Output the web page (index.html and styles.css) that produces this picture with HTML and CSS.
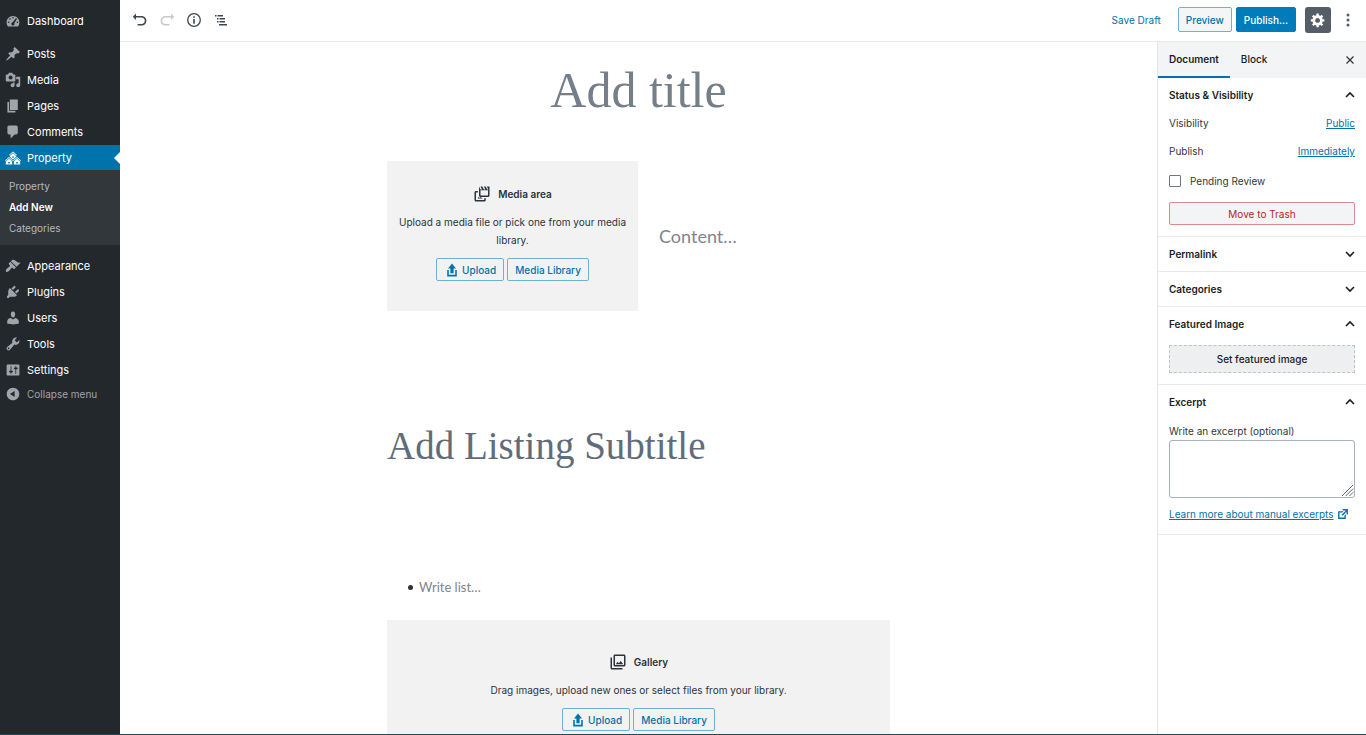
FILE: index.html
```html
<!DOCTYPE html>
<html lang="en">
<head>
<meta charset="utf-8">
<title>Add New Property</title>
<link rel="stylesheet" href="styles.css">
</head>
<body>
<svg class="sprite" aria-hidden="true">
  <symbol id="i-upload" viewBox="0 0 20 20"><path d="M8 14V8H5l5-6 5 6h-3v6H8zm-2 2v-6H4v8h12v-8h-2v6H6z"/></symbol>
  <symbol id="i-down" viewBox="0 0 12 12"><path d="M2 4l4 4 4-4" fill="none" stroke="currentColor" stroke-width="1.6"/></symbol>
  <symbol id="i-up" viewBox="0 0 12 12"><path d="M2 8l4-4 4 4" fill="none" stroke="currentColor" stroke-width="1.6"/></symbol>
</svg>
<div class="app">
  <nav class="menu" aria-label="Main menu">
    <ul class="menu-list">
      <li><a class="menu-item" href="#"><svg class="icon" viewBox="0 0 20 20"><path fill-rule="evenodd" d="M3.76 17h12.48A8.3 8.3 0 0 0 18 11.9C18 7.5 14.4 3.9 10 3.9s-8 3.6-8 8c0 1.9.7 3.7 1.76 5.1zM10 5a1 1 0 1 1 0 2 1 1 0 0 1 0-2zM6.2 6.5a1 1 0 1 1 0 2 1 1 0 0 1 0-2zM13.8 6.2l1.2 1-3.3 5.6a2 2 0 1 1-2-1.1zM4.5 10.5a1 1 0 1 1 0 2 1 1 0 0 1 0-2zM15.5 10.5a1 1 0 1 1 0 2 1 1 0 0 1 0-2z"/></svg>Dashboard</a></li>
      <li class="menu-gap small"><a class="menu-item" href="#"><svg class="icon" viewBox="0 0 20 20"><path d="M10.44 3.02l1.82-1.82 6.36 6.35-1.83 1.82c-1.05-.68-2.48-.57-3.41.36l-.75.75c-.92.93-1.04 2.35-.35 3.41l-1.83 1.82-2.41-2.41-2.8 2.79c-.42.42-3.38 2.71-3.8 2.29s1.86-3.39 2.28-3.81l2.79-2.79L4.1 9.36l1.83-1.82c1.05.69 2.48.57 3.4-.36l.75-.75c.93-.92 1.05-2.35.36-3.41z"/></svg>Posts</a></li>
      <li><a class="menu-item" href="#"><svg class="icon" viewBox="0 0 20 20"><path d="M13 11V4c0-.55-.45-1-1-1h-1.67L9 1H5L3.67 3H2c-.55 0-1 .45-1 1v7c0 .55.45 1 1 1h10c.55 0 1-.45 1-1zM7 4.5c1.38 0 2.5 1.12 2.5 2.5S8.38 9.5 7 9.5 4.5 8.38 4.5 7 5.62 4.5 7 4.5zM14 6h5v10.5c0 1.38-1.12 2.5-2.5 2.5S14 17.88 14 16.5s1.12-2.5 2.5-2.5c.17 0 .34.02.5.05V9h-3V6zm-4 8.05V13h2v3.5c0 1.38-1.12 2.5-2.5 2.5S7 17.88 7 16.5 8.12 14 9.5 14c.17 0 .34.02.5.05z"/></svg>Media</a></li>
      <li><a class="menu-item" href="#"><svg class="icon" viewBox="0 0 20 20"><path d="M6 15V2h10v13H6zm-1 1h8v2H3V5h2v11z"/></svg>Pages</a></li>
      <li><a class="menu-item" href="#"><svg class="icon" viewBox="0 0 20 20"><path d="M5 2h9c1.1 0 2 .9 2 2v7c0 1.1-.9 2-2 2h-2l-5 5v-5H5c-1.1 0-2-.9-2-2V4c0-1.1.9-2 2-2z"/></svg>Comments</a></li>
      <li><a class="menu-item current" href="#" aria-current="page"><svg class="icon" viewBox="0 0 20 20"><path d="M14.27 6.87L10 3.14 5.73 6.87 5 6.14l5-4.38 5 4.38zM14 8.42l-4.05 3.43L6 8.38v-.74l4-3.5 4 3.5v.78zM11 9.7V8H9v1.7h2zm-1.73 4.03L5 10 .73 13.73 0 13l5-4.38L10 13zm10 0L15 10l-4.27 3.73L10 13l5-4.38L20 13zM5 11l4 3.5V18H1v-3.5zm10 0l4 3.5V18h-8v-3.5zm-9 6v-2H4v2h2zm10 0v-2h-2v2h2z"/></svg>Property</a>
        <ul class="submenu">
          <li><a href="#">Property</a></li>
          <li><a class="active" href="#">Add New</a></li>
          <li><a href="#">Categories</a></li>
        </ul>
      </li>
      <li class="menu-gap"><a class="menu-item" href="#"><svg class="icon" viewBox="0 0 20 20"><path d="M14.48 11.06L7.41 3.99l1.5-1.5c.5-.56 2.3-.47 3.51.32 1.21.8 1.43 1.28 2.91 2.1 1.18.64 2.45 1.26 4.45.85zm-.71.71L6.7 4.7 4.93 6.47c-.39.39-.39 1.02 0 1.41l1.06 1.06c.39.39.39 1.03 0 1.42-.6.6-1.43 1.11-2.21 1.69-.35.26-.7.53-1.01.84C1.43 14.23.4 16.08 1.4 17.07c.99 1 2.84-.03 4.18-1.36.31-.31.58-.66.85-1.02.57-.78 1.08-1.61 1.69-2.21.39-.39 1.02-.39 1.41 0l1.06 1.06c.39.39 1.02.39 1.41 0z"/></svg>Appearance</a></li>
      <li><a class="menu-item" href="#"><svg class="icon" viewBox="0 0 20 20"><path d="M13.11 4.36L9.87 7.6 8 5.73l3.24-3.24c.35-.34 1.05-.2 1.56.32.52.51.66 1.21.31 1.55zm-8 1.77l.91-1.12 9.01 9.01-1.19.84c-.71.71-2.63 1.16-3.82 1.16H6.14L4.9 17.26c-.59.59-1.54.59-2.12 0-.59-.58-.59-1.53 0-2.12l1.24-1.24v-3.88c0-1.13.4-3.19 1.09-3.89zm7.26 3.97l3.24-3.24c.34-.35 1.04-.21 1.55.31.52.51.66 1.21.31 1.55l-3.24 3.25z"/></svg>Plugins</a></li>
      <li><a class="menu-item" href="#"><svg class="icon" viewBox="0 0 20 20"><path d="M10 9.25c-2.27 0-2.73-3.44-2.73-3.44C7 4.02 7.82 2 9.97 2c2.16 0 2.98 2.02 2.71 3.81 0 0-.41 3.44-2.68 3.44zm0 2.57L12.72 10c2.39 0 4.52 2.33 4.52 4.53v2.49s-3.65 1.13-7.24 1.13c-3.65 0-7.24-1.13-7.24-1.13v-2.49c0-2.25 1.94-4.48 4.47-4.48z"/></svg>Users</a></li>
      <li><a class="menu-item" href="#"><svg class="icon" viewBox="0 0 20 20"><path d="M16.68 9.77c-1.34 1.34-3.3 1.67-4.95.99l-5.41 6.52c-.99.99-2.59.99-3.58 0s-.99-2.59 0-3.57l6.52-5.42c-.68-1.65-.35-3.61.99-4.95 1.28-1.28 3.12-1.62 4.72-1.06l-2.89 2.89 2.82 2.82 2.86-2.87c.53 1.58.18 3.39-1.08 4.65zM3.81 16.21c.4.39 1.04.39 1.43 0 .4-.4.4-1.04 0-1.43-.39-.4-1.03-.4-1.43 0-.39.39-.39 1.03 0 1.43z"/></svg>Tools</a></li>
      <li><a class="menu-item" href="#"><svg class="icon" viewBox="0 0 20 20"><path d="M18 16V4c0-.55-.45-1-1-1H3c-.55 0-1 .45-1 1v12c0 .55.45 1 1 1h14c.55 0 1-.45 1-1zM8 11h1c.55 0 1 .45 1 1s-.45 1-1 1H8v1.5c0 .28-.22.5-.5.5s-.5-.22-.5-.5V13H6c-.55 0-1-.45-1-1s.45-1 1-1h1V5.5c0-.28.22-.5.5-.5s.5.22.5.5V11zm5-2h-1c-.55 0-1-.45-1-1s.45-1 1-1h1V5.5c0-.28.22-.5.5-.5s.5.22.5.5V7h1c.55 0 1 .45 1 1s-.45 1-1 1h-1v5.5c0 .28-.22.5-.5.5s-.5-.22-.5-.5V9z"/></svg>Settings</a></li>
    </ul>
    <button class="menu-item collapse" type="button"><svg class="icon" viewBox="0 0 20 20"><path d="M10 2.16c4.33 0 7.84 3.51 7.84 7.84s-3.51 7.84-7.84 7.84S2.16 14.33 2.16 10 5.71 2.16 10 2.16zm2 11.72V6.12L6.18 9.97z"/></svg>Collapse menu</button>
  </nav>

  <div class="editor">
    <header class="toolbar">
      <div class="tools">
        <button class="tool" type="button" aria-label="Undo"><svg class="icon" viewBox="0 0 20 20"><path d="M12 5H5V2L1 6l4 4V7h7c2.2 0 4 1.8 4 4s-1.8 4-4 4H7v2h5c3.3 0 6-2.7 6-6s-2.7-6-6-6z"/></svg></button>
        <button class="tool faded" type="button" aria-label="Redo"><svg class="icon" viewBox="0 0 20 20"><path d="M8 5h7V2l4 4-4 4V7H8c-2.2 0-4 1.8-4 4s1.8 4 4 4h5v2H8c-3.3 0-6-2.7-6-6s2.7-6 6-6z"/></svg></button>
        <button class="tool" type="button" aria-label="Content structure"><svg class="icon" viewBox="0 0 16 16"><circle cx="8" cy="8" r="6.3" fill="none" stroke="currentColor" stroke-width="1.3"/><path d="M7.2 4.2h1.6v1.6H7.2zM7.2 7h1.6v4.8H7.2z"/></svg></button>
        <button class="tool" type="button" aria-label="Block navigation"><svg class="icon" viewBox="0 0 16 16"><path d="M2 3h1.500v1.400H2zM4.500 3H10v1.400H4.500zM4 6h1.500v1.400H4zM6.500 6H12v1.400H6.500zM4 9h1.500v1.400H4zM6.500 9H12v1.400H6.500zM6 12h8v1.400H6z"/></svg></button>
      </div>
      <div class="actions">
        <button class="link-button" type="button">Save Draft</button>
        <button class="button preview" type="button">Preview</button>
        <button class="button primary" type="button">Publish…</button>
        <button class="gear" type="button" aria-label="Settings"><svg class="icon" viewBox="0 0 20 20"><path fill-rule="evenodd" d="M18 12h-2.18c-.17.7-.44 1.35-.81 1.93l1.54 1.54-2.1 2.1-1.54-1.54c-.58.36-1.23.63-1.91.79V19H8v-2.18c-.68-.16-1.33-.43-1.91-.79l-1.54 1.54-2.12-2.12 1.54-1.54c-.36-.58-.63-1.23-.79-1.91H1V9.030h2.170c.16-.7.44-1.350.8-1.940L2.430 5.550l2.100-2.100 1.540 1.540c.58-.37 1.240-.64 1.930-.81V2h3v2.180c.68.16 1.330.43 1.910.79l1.540-1.540 2.120 2.120-1.540 1.540c.36.59.64 1.240.8 1.940H18V12zm-8.500 1.500c1.660 0 3-1.340 3-3s-1.340-3-3-3-3 1.340-3 3 1.340 3 3 3z"/></svg></button>
        <button class="more" type="button" aria-label="More options"><svg viewBox="0 0 4 14" width="4" height="14"><circle cx="2" cy="2" r="1.500"/><circle cx="2" cy="7" r="1.500"/><circle cx="2" cy="12" r="1.500"/></svg></button>
      </div>
    </header>

    <div class="workspace">
      <main class="canvas">
        <div class="column">
          <input class="field title" type="text" placeholder="Add title" aria-label="Title">
          <section class="media-text">
            <div class="placeholder">
              <h2 class="placeholder-title"><svg class="block-icon" viewBox="0 0 24 24"><path fill-rule="evenodd" d="M8 2l2 4h2l-2-4h2.500l2 4h2l-2-4H17l2 4h1.500l-2-4H22v12c0 1.100-.9 2-2 2H10c-1.100 0-2-.9-2-2zm2 5v7h10V7zM2 10c0-1.100.9-2 2-2h2.500v2H4v10h11v-2.500h2V20c0 1.100-.9 2-2 2H4c-1.100 0-2-.9-2-2zM6 18l1.500-2 1.500 1.300 1-1.300 3 2z"/></svg>Media area</h2>
              <p>Upload a media file or pick one from your media library.</p>
              <div class="placeholder-actions">
                <button class="button" type="button"><svg class="icon"><use href="#i-upload"/></svg>Upload</button>
                <button class="button" type="button">Media Library</button>
              </div>
            </div>
            <input class="field content" type="text" placeholder="Content…" aria-label="Content">
          </section>
          <input class="field subtitle" type="text" placeholder="Add Listing Subtitle" aria-label="Listing subtitle">
          <ul class="list"><li><input class="field list-text" type="text" placeholder="Write list…" aria-label="List item"></li></ul>
          <section class="placeholder">
            <h2 class="placeholder-title"><svg class="block-icon" viewBox="0 0 24 24"><path d="M20 4v12H8V4h12m0-2H8c-1.100 0-2 .9-2 2v12c0 1.100.9 2 2 2h12c1.100 0 2-.9 2-2V4c0-1.100-.9-2-2-2zM9 15l2.500-3.500 1.700 2 2.400-2.700L19 15zM2 6v14c0 1.100.9 2 2 2h14v-2H4V6H2z"/></svg>Gallery</h2>
            <p>Drag images, upload new ones or select files from your library.</p>
            <div class="placeholder-actions">
              <button class="button" type="button"><svg class="icon"><use href="#i-upload"/></svg>Upload</button>
              <button class="button" type="button">Media Library</button>
            </div>
          </section>
        </div>
      </main>

      <aside class="settings">
        <div class="tabs">
          <button class="tab selected" type="button">Document</button>
          <button class="tab" type="button">Block</button>
          <button class="close" type="button" aria-label="Close settings"><svg viewBox="0 0 10 10" width="10" height="10"><path d="M1.500 1.500l7 7m0-7l-7 7" stroke="currentColor" stroke-width="1.300"/></svg></button>
        </div>
        <section class="panel">
          <h2><button class="panel-head" type="button">Status &amp; Visibility<svg class="chevron"><use href="#i-up"/></svg></button></h2>
          <div class="panel-body">
            <div class="row"><span>Visibility</span><a href="#">Public</a></div>
            <div class="row"><span>Publish</span><a href="#">Immediately</a></div>
            <label class="check"><input type="checkbox">Pending Review</label>
            <button class="button danger" type="button">Move to Trash</button>
          </div>
        </section>
        <section class="panel"><h2><button class="panel-head" type="button">Permalink<svg class="chevron"><use href="#i-down"/></svg></button></h2></section>
        <section class="panel"><h2><button class="panel-head" type="button">Categories<svg class="chevron"><use href="#i-down"/></svg></button></h2></section>
        <section class="panel">
          <h2><button class="panel-head" type="button">Featured Image<svg class="chevron"><use href="#i-up"/></svg></button></h2>
          <div class="panel-body"><button class="featured" type="button">Set featured image</button></div>
        </section>
        <section class="panel">
          <h2><button class="panel-head" type="button">Excerpt<svg class="chevron"><use href="#i-up"/></svg></button></h2>
          <div class="panel-body">
            <label class="excerpt-label" for="excerpt">Write an excerpt (optional)</label>
            <div class="excerpt-box">
              <textarea id="excerpt"></textarea>
              <svg class="grip" viewBox="0 0 14 14"><path d="M1 13L13 1M5 13l8-8M9 13l4-4" stroke="currentColor" stroke-width="1"/></svg>
            </div>
            <a class="learn" href="#">Learn more about manual excerpts<svg class="icon" viewBox="0 0 20 20"><path d="M9 3h8v8l-2-1V6.920l-5.600 5.590-1.410-1.410L14.080 5H10zm3 12v-3l2-2v7H3V6h8L9 8H5v7h7z"/></svg></a>
          </div>
        </section>
      </aside>
    </div>
  </div>
</div>
</body>
</html>
```
FILE: styles.css
```css
* { box-sizing: border-box; }
body {
  margin: 0;
  font: 400 10px/18px Inter, "Liberation Sans", sans-serif;
  color: #32373c;
  background: #fff;
}
button, input, textarea { font: inherit; color: inherit; }
button { margin: 0; padding: 0; border: 0; background: none; cursor: pointer; white-space: nowrap; }
ul, h2, p { margin: 0; padding: 0; }
ul { list-style: none; }
h2 { font-size: 10px; font-weight: 600; }
a { color: #0073aa; }
svg { fill: currentColor; flex: none; }
.sprite { position: absolute; width: 0; height: 0; }
.icon { width: 16px; height: 16px; }

.app { display: flex; height: 100vh; overflow: hidden; border-bottom: 1px solid #1f4a56; }

/* Main menu */
.menu { flex: none; width: 120px; padding-top: 8px; background: #23282d; }
.menu-item {
  display: flex;
  align-items: center;
  gap: 6px;
  width: 100%;
  height: 26px;
  padding-left: 5px;
  font-size: 11px;
  color: #fff;
  text-decoration: none;
}
.menu-item .icon { color: #a0a5aa; }
.menu-gap { padding-top: 8px; }
.menu-gap.small { padding-top: 7px; }
.menu-item.current { position: relative; height: 25px; background: #0073aa; }
.menu-item.current .icon { color: #fff; }
.menu-item.current::after {
  content: "";
  position: absolute;
  right: 0;
  border: 6px solid transparent;
  border-left: 0;
  border-right-color: #fff;
}
.menu-item.collapse { height: 22px; font-size: 10px; color: #a0a5aa; }
.submenu { padding: 6px 0; background: #32373c; }
.submenu a { display: block; padding-left: 9px; line-height: 21px; color: #b4b9be; text-decoration: none; }
.submenu .active { font-weight: 600; color: #fff; }

/* Top toolbar */
.editor { flex: 1; min-width: 0; display: flex; flex-direction: column; }
.toolbar {
  flex: none;
  display: flex;
  align-items: center;
  justify-content: space-between;
  height: 42px;
  padding: 0 10px 2px 6px;
  border-bottom: 1px solid #e8eaeb;
}
.tools, .actions { display: flex; align-items: center; }
.tool { display: flex; align-items: center; justify-content: center; width: 27px; height: 26px; color: #40464d; }
.tool.faded { color: #c8cacc; }
.link-button { margin-right: 17px; color: #0073aa; }
.button {
  display: inline-flex;
  align-items: center;
  justify-content: center;
  gap: 2px;
  height: 23px;
  padding: 0 7px;
  border: 1px solid #6cb2d6;
  border-radius: 2px;
  font-weight: 500;
  color: #0073aa;
}
.preview, .primary { height: 25px; }
.preview { background: #f3f5f6; }
.primary { margin-left: 4px; border-color: #007cba; background: #007cba; color: #fff; }
.gear { display: flex; align-items: center; justify-content: center; width: 26px; height: 26px; margin-left: 9px; border-radius: 3px; background: #555d66; color: #fff; }
.more { display: flex; justify-content: center; width: 16px; margin-left: 9px; color: #555d66; }

/* Canvas */
.workspace { flex: 1; min-height: 0; display: flex; }
.canvas { flex: 1; min-width: 0; overflow: hidden; padding: 16px 24px 0; }
.column { max-width: 503px; margin: 0 auto; }
.field { display: block; width: 100%; min-width: 0; padding: 0; border: 0; background: none; }
.field::placeholder { color: #7f848d; opacity: 1; }
.title { font: 50px/64px "Liberation Serif", serif; text-align: center; height: 64px; }
.title::placeholder { color: #747f8a; }
.media-text { display: grid; grid-template-columns: 251px 1fr; align-items: center; column-gap: 21px; margin-top: 39px; }
.content { font: 18px/28px Lato, sans-serif; }
.placeholder { min-height: 150px; padding: 22px 8px; background: #f2f2f3; text-align: center; color: #2b323b; }
.placeholder-title { display: flex; align-items: center; justify-content: center; gap: 7px; height: 22px; }
.block-icon { width: 18px; height: 18px; }
.placeholder p { margin-top: 8px; }
.placeholder-actions { display: flex; justify-content: center; gap: 3px; margin-top: 9px; }
.subtitle { margin-top: 109px; height: 52px; font: 39px/52px "Liberation Serif", serif; }
.subtitle::placeholder { color: #5f6d7b; }
.list { margin-top: 105px; padding-left: 21px; }
.list li { display: flex; align-items: center; gap: 6px; }
.list li::before { content: ""; flex: none; width: 5px; height: 5px; border-radius: 50%; background: #2b323b; }
.list-text { height: 20px; font: 13px/20px Lato, sans-serif; }
.list + .placeholder { margin-top: 23px; padding-top: 31px; }

/* Settings sidebar */
.settings { flex: none; width: 209px; border-left: 1px solid #e2e4e7; }
.tabs { display: flex; height: 36px; background: #f3f4f5; }
.tab { padding: 0 11px; border-bottom: 2px solid transparent; font-weight: 500; color: #191e23; }
.tab.selected { border-bottom-color: #0071b8; font-weight: 600; }
.close { display: flex; align-items: center; margin: 0 11px 0 auto; }
.panel { border-bottom: 1px solid #e8eaeb; }
.panel-head { display: flex; align-items: center; justify-content: space-between; width: 100%; height: 34px; padding: 0 10px 0 11px; color: #191e23; }
.chevron { width: 12px; height: 12px; }
.panel-body { padding: 0 11px 11px; }
.row { display: flex; justify-content: space-between; margin-bottom: 10px; }
.row:first-child { padding-top: 2px; }
.check { display: flex; align-items: center; gap: 9px; padding-top: 2px; }
.check input { appearance: none; width: 12px; height: 12px; margin: 0; border: 1px solid #6c7781; border-radius: 1px; }
.danger { display: flex; width: 100%; margin-top: 12px; border-color: #df8a8a; background: #f3f4f5; font-weight: 400; color: #b52727; }
.featured { display: block; width: 100%; height: 28px; margin-top: 4px; border: 1px dashed #c0c4c8; background: #edeff0; color: #191e23; font-weight: 500; }
.excerpt-label { display: block; padding-top: 3px; }
.excerpt-box { position: relative; }
textarea { display: block; width: 100%; height: 58px; border: 1px solid #a9b1b9; border-radius: 3px; resize: none; }
.grip { position: absolute; right: 1px; bottom: 1px; width: 13px; height: 13px; color: #555; }
.learn { display: flex; align-items: center; gap: 2px; margin-top: 7px; white-space: nowrap; }
.learn .icon { width: 14px; height: 14px; }
```
